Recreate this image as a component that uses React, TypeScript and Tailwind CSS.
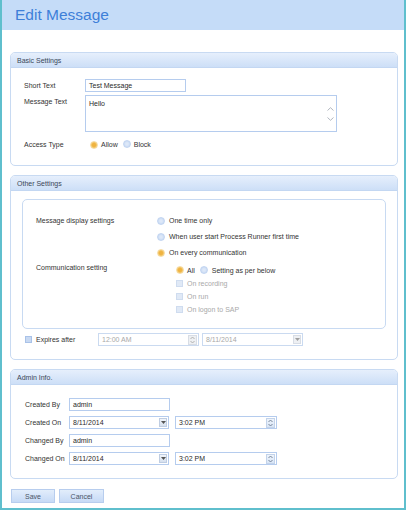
import React from "react";

function Radio({ on }: { on?: boolean }) {
  return on ? (
    <span className="inline-block w-[8px] h-[8px] rounded-full shrink-0 border border-[#f6dca4] bg-[radial-gradient(circle,#efb340_35%,#f5cf7c_80%)]" />
  ) : (
    <span className="inline-block w-[8px] h-[8px] rounded-full shrink-0 border border-[#c2d5f1] bg-[radial-gradient(circle,#dde8f8_25%,#c6d8f3_85%)]" />
  );
}

function Check({ disabled }: { disabled?: boolean }) {
  return disabled ? (
    <span className="inline-block w-[7px] h-[7px] shrink-0 border border-[#cfdcef] bg-[#e0e9f6]" />
  ) : (
    <span className="inline-block w-[7px] h-[7px] shrink-0 border border-[#a9c2e8] bg-[#c8d9f2]" />
  );
}

function Input({ value, w, disabled, children }: { value: string; w: string; disabled?: boolean; children?: React.ReactNode }) {
  return (
    <div
      className={`${w} h-[13px] border ${disabled ? "border-[#cadaf0] text-[#a8a8a8]" : "border-[#b5ccee] text-[#2a2a2a]"} bg-white flex items-center pl-[3px] pr-[1px] shrink-0`}
    >
      <span className="flex-1 leading-none">{value}</span>
      {children}
    </div>
  );
}

function DropBtn({ disabled }: { disabled?: boolean }) {
  return (
    <span className={`w-[8px] h-[9px] border ${disabled ? "border-[#d8dde5] bg-[#eef0f3]" : "border-[#bfcde2] bg-linear-to-b from-[#f1f5fb] to-[#d6e0ee]"} flex items-center justify-center`}>
      <svg width="5" height="3" viewBox="0 0 5 3">
        <path d="M0 0 L5 0 L2.5 3 Z" fill={disabled ? "#a0a0a0" : "#555"} />
      </svg>
    </span>
  );
}

function Spin({ disabled }: { disabled?: boolean }) {
  return (
    <span className={`w-[9px] h-[10px] border ${disabled ? "border-[#d8dde5] bg-[#eef0f3]" : "border-[#c3d3ea] bg-linear-to-b from-[#eef4fc] to-[#d8e5f6]"} flex items-center justify-center`}>
      <svg width="5" height="8" viewBox="0 0 5 8">
        <path d="M0.5 3 L2.5 1 L4.5 3 M0.5 5 L2.5 7 L4.5 5" fill="none" stroke={disabled ? "#a9a9a9" : "#6b7a90"} strokeWidth="0.9" />
      </svg>
    </span>
  );
}

function Panel({ title, h, children }: { title: string; h: string; children: React.ReactNode }) {
  return (
    <div className={`ml-[8px] mr-[6px] ${h} rounded-[5px] border border-[#c8daf2] bg-white overflow-hidden flex flex-col`}>
      <div className="h-[15px] shrink-0 bg-linear-to-b from-[#e6effc] to-[#cddff7] border-b border-[#c3d7f2] pl-[6px] flex items-center text-[#3a4658]">
        {title}
      </div>
      <div className="flex-1">{children}</div>
    </div>
  );
}

export default function App() {
  return (
    <div className="w-[406px] h-[510px] border-x-2 border-b-2 border-[#5fbfcd] bg-white flex flex-col font-['Liberation_Sans',Arial,sans-serif] text-[7px] text-[#333] leading-none">
      <div className="h-[30px] shrink-0 bg-[#c5dcf8] pl-[13px] flex items-center">
        <span className="text-[15.5px] text-[#3d7fd8] font-['Liberation_Sans',Arial,sans-serif]">Edit Message</span>
      </div>

      <div className="h-[22px] shrink-0" />

      <Panel title="Basic Settings" h="h-[114px]">
        <div className="pl-[13px] pt-[11px] flex flex-col">
          <div className="flex items-center h-[13px]">
            <span className="w-[61px]">Short Text</span>
            <Input value="Test Message" w="w-[101px]" />
          </div>
          <div className="flex mt-[3px]">
            <span className="w-[61px] pt-[3px]">Message Text</span>
            <div className="w-[252px] h-[37px] border border-[#b5ccee] bg-white flex">
              <span className="flex-1 pl-[3px] pt-[4px] text-[#2a2a2a]">Hello</span>
              <div className="w-[10px] flex flex-col items-center justify-center gap-[6px] pr-[2px]">
                <svg width="7" height="4" viewBox="0 0 7 4">
                  <path d="M0.5 3.5 L3.5 0.7 L6.5 3.5" fill="none" stroke="#a8aeb8" strokeWidth="0.9" />
                </svg>
                <svg width="7" height="4" viewBox="0 0 7 4">
                  <path d="M0.5 0.5 L3.5 3.3 L6.5 0.5" fill="none" stroke="#a8aeb8" strokeWidth="0.9" />
                </svg>
              </div>
            </div>
          </div>
          <div className="flex items-center h-[13px] mt-[6px]">
            <span className="w-[66px]">Access Type</span>
            <Radio on />
            <span className="ml-[3px]">Allow</span>
            <span className="ml-[5px]"><Radio /></span>
            <span className="ml-[3px]">Block</span>
          </div>
        </div>
      </Panel>

      <div className="h-[9px] shrink-0" />

      <Panel title="Other Settings" h="h-[185px]">
        <div className="flex flex-col">
          <div className="mt-[8px] ml-[11px] mr-[11px] h-[130px] rounded-[5px] border border-[#c8daf2] pl-[13px] pt-[14px]">
            <div className="flex">
              <span className="w-[121px] pt-[3px]">Message display settings</span>
              <div className="flex flex-col gap-[3px]">
                <div className="flex items-center h-[13px]"><Radio /><span className="ml-[4px]">One time only</span></div>
                <div className="flex items-center h-[13px]"><Radio /><span className="ml-[4px]">When user start Process Runner first time</span></div>
                <div className="flex items-center h-[13px]"><Radio on /><span className="ml-[4px]">On every communication</span></div>
              </div>
            </div>
            <div className="flex mt-[2px]">
              <span className="w-[140px] pt-[3px]">Communication setting</span>
              <div className="flex flex-col pt-[3px] gap-[1px]">
                <div className="flex items-center h-[12px]">
                  <Radio on /><span className="ml-[3px]">All</span>
                  <span className="ml-[5px]"><Radio /></span><span className="ml-[4px]">Setting as per below</span>
                </div>
                <div className="flex items-center h-[12px] text-[#a9a9a9]"><Check disabled /><span className="ml-[4px]">On recording</span></div>
                <div className="flex items-center h-[12px] text-[#a9a9a9]"><Check disabled /><span className="ml-[4px]">On run</span></div>
                <div className="flex items-center h-[12px] text-[#a9a9a9]"><Check disabled /><span className="ml-[4px]">On logon to SAP</span></div>
              </div>
            </div>
          </div>
          <div className="flex items-center h-[13px] mt-[4px] pl-[14px]">
            <div className="w-[73px] flex items-center">
              <Check /><span className="ml-[4px]">Expires after</span>
            </div>
            <Input value="12:00 AM" w="w-[101px]" disabled><Spin disabled /></Input>
            <span className="w-[3px]" />
            <Input value="8/11/2014" w="w-[101px]" disabled><DropBtn disabled /></Input>
          </div>
        </div>
      </Panel>

      <div className="h-[9px] shrink-0" />

      <Panel title="Admin Info." h="h-[110px]">
        <div className="pl-[14px] pt-[13px] flex flex-col gap-[5px]">
          <div className="flex items-center h-[13px]">
            <span className="w-[44px]">Created By</span>
            <Input value="admin" w="w-[101px]" />
          </div>
          <div className="flex items-center h-[13px]">
            <span className="w-[44px]">Created On</span>
            <Input value="8/11/2014" w="w-[100px]"><DropBtn /></Input>
            <span className="w-[6px]" />
            <Input value="3:02 PM" w="w-[102px]"><Spin /></Input>
          </div>
          <div className="flex items-center h-[13px]">
            <span className="w-[44px]">Changed By</span>
            <Input value="admin" w="w-[101px]" />
          </div>
          <div className="flex items-center h-[13px]">
            <span className="w-[44px]">Changed On</span>
            <Input value="8/11/2014" w="w-[100px]"><DropBtn /></Input>
            <span className="w-[6px]" />
            <Input value="3:02 PM" w="w-[102px]"><Spin /></Input>
          </div>
        </div>
      </Panel>

      <div className="flex gap-[4px] ml-[9px] mt-[10px]">
        <button className="w-[44px] h-[14px] border border-[#b7cdee] bg-linear-to-b from-[#e2edfb] to-[#c6daf6] text-[#4a5566] flex items-center justify-center">Save</button>
        <button className="w-[45px] h-[14px] border border-[#b7cdee] bg-linear-to-b from-[#e2edfb] to-[#c6daf6] text-[#4a5566] flex items-center justify-center">Cancel</button>
      </div>
    </div>
  );
}
